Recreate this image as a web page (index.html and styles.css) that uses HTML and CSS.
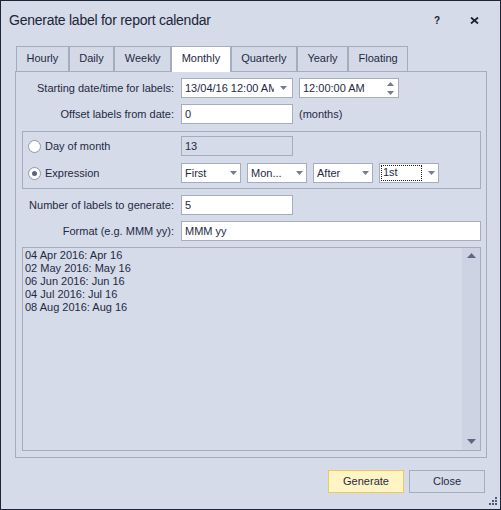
FILE: index.html
```html
<!DOCTYPE html>
<html>
<head>
<meta charset="utf-8">
<link rel="stylesheet" href="styles.css">
</head>
<body>
<div class="window">
  <div class="titlebar">
    <div class="title">Generate label for report calendar</div>
    <div class="tb-help">?</div>
    <div class="tb-close"><svg width="9" height="7" viewBox="0 0 9 7"><path d="M1 0.5L8 6.5M8 0.5L1 6.5" stroke="#1a2233" stroke-width="1.8" fill="none"/></svg></div>
  </div>
  <div class="tabs">
    <div class="tab">Hourly</div>
    <div class="tab">Daily</div>
    <div class="tab">Weekly</div>
    <div class="tab active">Monthly</div>
    <div class="tab">Quarterly</div>
    <div class="tab">Yearly</div>
    <div class="tab">Floating</div>
  </div>
  <div class="page">
    <div class="row">
      <div class="lbl">Starting date/time for labels:</div>
      <div class="field combo w112"><span class="val">13/04/16 12:00 AM</span><svg class="arrow" width="7" height="4" viewBox="0 0 7 4"><path d="M0 0H7L3.5 4Z"/></svg></div>
      <div class="field spin w100"><span class="val">12:00:00 AM</span><span class="spin-btns"><svg width="7" height="4" viewBox="0 0 7 4"><path d="M0 4H7L3.5 0Z"/></svg><svg width="7" height="4" viewBox="0 0 7 4"><path d="M0 0H7L3.5 4Z"/></svg></span></div>
    </div>
    <div class="row">
      <div class="lbl">Offset labels from date:</div>
      <div class="field w112"><span class="val">0</span></div>
      <div class="unit">(months)</div>
    </div>
    <div class="group">
      <div class="grow">
        <div class="opt"><span class="radio"></span><span>Day of month</span></div>
        <div class="field disabled w112"><span class="val">13</span></div>
      </div>
      <div class="grow">
        <div class="opt"><span class="radio checked"></span><span>Expression</span></div>
        <div class="combos">
          <div class="field combo w60"><span class="val">First</span><svg class="arrow" width="7" height="4" viewBox="0 0 7 4"><path d="M0 0H7L3.5 4Z"/></svg></div>
          <div class="field combo w60"><span class="val">Mon...</span><svg class="arrow" width="7" height="4" viewBox="0 0 7 4"><path d="M0 0H7L3.5 4Z"/></svg></div>
          <div class="field combo w60"><span class="val">After</span><svg class="arrow" width="7" height="4" viewBox="0 0 7 4"><path d="M0 0H7L3.5 4Z"/></svg></div>
          <div class="field combo w60 focus"><span class="val"><span class="focusbox">1st</span></span><svg class="arrow" width="7" height="4" viewBox="0 0 7 4"><path d="M0 0H7L3.5 4Z"/></svg></div>
        </div>
      </div>
    </div>
    <div class="row">
      <div class="lbl">Number of labels to generate:</div>
      <div class="field w112"><span class="val">5</span></div>
    </div>
    <div class="row">
      <div class="lbl">Format (e.g. MMM yy):</div>
      <div class="field grow-field"><span class="val">MMM yy</span></div>
    </div>
    <div class="list">
      <div class="items">
        <div>04 Apr 2016: Apr 16</div>
        <div>02 May 2016: May 16</div>
        <div>06 Jun 2016: Jun 16</div>
        <div>04 Jul 2016: Jul 16</div>
        <div>08 Aug 2016: Aug 16</div>
      </div>
      <div class="scroll">
        <svg width="9" height="5" viewBox="0 0 9 5"><path d="M0 5H9L4.5 0Z"/></svg>
        <svg width="9" height="5" viewBox="0 0 9 5"><path d="M0 0H9L4.5 5Z"/></svg>
      </div>
    </div>
  </div>
  <div class="footer">
    <div class="btn primary">Generate</div>
    <div class="btn">Close</div>
  </div>
  <svg class="grip" width="11" height="11" viewBox="0 0 11 11">
    <rect x="8" y="2" width="2" height="2"/>
    <rect x="5" y="5" width="2" height="2"/><rect x="8" y="5" width="2" height="2"/>
    <rect x="2" y="8" width="2" height="2"/><rect x="5" y="8" width="2" height="2"/><rect x="8" y="8" width="2" height="2"/>
  </svg>
</div>
</body>
</html>
```
FILE: styles.css
```css
body {
  margin: 0;
  font-family: "Liberation Sans", Arial, sans-serif;
  font-size: 11px;
  color: #1e2a44;
}
.window {
  position: relative;
  width: 501px;
  height: 510px;
  box-sizing: border-box;
  border: 1px solid #1a2638;
  background: #d6dbe9;
  display: flex;
  flex-direction: column;
}
.titlebar {
  height: 45px;
  flex-shrink: 0;
  display: flex;
  align-items: flex-start;
}
.title {
  flex: 1;
  padding: 11px 0 0 8px;
  font-size: 14px;
  line-height: 16px;
  letter-spacing: -0.25px;
  color: #1b2538;
}
.tb-help {
  margin-top: 15px;
  width: 10px;
  text-align: center;
  font-weight: bold;
  font-size: 10px;
  line-height: 10px;
  color: #1a2233;
  margin-right: 28px;
}
.tb-close {
  margin-top: 16px;
  margin-right: 21px;
  height: 7px;
}
.tb-close svg { display: block; }
.tabs {
  display: flex;
  height: 25px;
  margin-left: 15px;
  flex-shrink: 0;
}
.tab {
  box-sizing: border-box;
  height: 25px;
  padding: 0 9.5px;
  border: 1px solid #a5adbd;
  border-bottom: none;
  line-height: 23px;
  background: #d4d9e7;
}
.tab.active {
  background: #ffffff;
  height: 26px;
  position: relative;
  z-index: 1;
}
.page {
  margin-left: 14px;
  width: 472px;
  height: 387px;
  flex-shrink: 0;
  box-sizing: border-box;
  border: 1px solid #a5adbd;
  padding: 6px 5px 6px 6px;
  display: flex;
  flex-direction: column;
  gap: 6px;
}
.row {
  display: flex;
  align-items: center;
  height: 20px;
  flex-shrink: 0;
}
.lbl {
  width: 152px;
  margin-right: 7px;
  text-align: right;
  white-space: nowrap;
}
.field {
  box-sizing: border-box;
  height: 20px;
  border: 1px solid #a5adbd;
  background: #ffffff;
  padding-left: 3px;
  display: flex;
  align-items: center;
  line-height: 18px;
  white-space: nowrap;
}
.field .val {
  flex: 1;
  overflow: hidden;
  white-space: nowrap;
}
.w112 { width: 112px; }
.w100 { width: 100px; margin-left: 6px; }
.w60 { width: 60px; }
.grow-field { flex: 1; }
.combo .arrow {
  flex-shrink: 0;
  margin: 0 3px 0 6px;
  fill: #737c90;
}
.w112.combo .val { flex: none; width: 89px; }
.spin-btns {
  display: flex;
  flex-direction: column;
  gap: 5px;
  margin-right: 4px;
  fill: #737c90;
}
.spin-btns svg { display: block; }
.unit { margin-left: 6px; }
.field.disabled { background: transparent; }
.group {
  margin-top: 1px;
  border: 1px solid #a5adbd;
  padding: 4px 0 5px 0;
  display: flex;
  flex-direction: column;
  gap: 7px;
  flex-shrink: 0;
}
.grow {
  display: flex;
  align-items: center;
  height: 20px;
}
.opt {
  width: 158px;
  box-sizing: border-box;
  padding-left: 5px;
  display: flex;
  align-items: center;
  gap: 4px;
}
.radio {
  width: 13px;
  height: 13px;
  box-sizing: border-box;
  border-radius: 50%;
  border: 1px solid #8e97aa;
  background: #ffffff;
  display: flex;
  align-items: center;
  justify-content: center;
}
.radio.checked::after {
  content: "";
  width: 5px;
  height: 5px;
  border-radius: 50%;
  background: #5a667e;
}
.combos {
  display: flex;
  gap: 6px;
}
.focus { padding-left: 1px; }
.focusbox {
  display: inline-block;
  box-sizing: border-box;
  width: 41px;
  height: 16px;
  line-height: 14px;
  padding-left: 2px;
  outline: 1px dotted #1a1a1a;
  outline-offset: -1px;
  vertical-align: middle;
}
.focus .val { line-height: 16px; display: flex; align-items: center; }
.list {
  flex: 1;
  border: 1px solid #a5adbd;
  display: flex;
}
.items {
  flex: 1;
  padding: 1px 2px;
  line-height: 13px;
}
.scroll {
  width: 18px;
  background: #cdd3e2;
  display: flex;
  flex-direction: column;
  justify-content: space-between;
  align-items: center;
  padding: 5px 0 6px;
  fill: #5c6985;
}
.scroll svg { display: block; }
.footer {
  display: flex;
  justify-content: flex-end;
  gap: 5px;
  margin-top: 12px;
  padding-right: 15px;
}
.btn {
  width: 76px;
  height: 23px;
  box-sizing: border-box;
  border: 1px solid #a5adbd;
  text-align: center;
  line-height: 21px;
}
.btn.primary {
  background: #fff4c4;
  border-color: #efc75e;
}
.grip {
  position: absolute;
  right: 2px;
  bottom: 3px;
  fill: #4e5a72;
}
```
